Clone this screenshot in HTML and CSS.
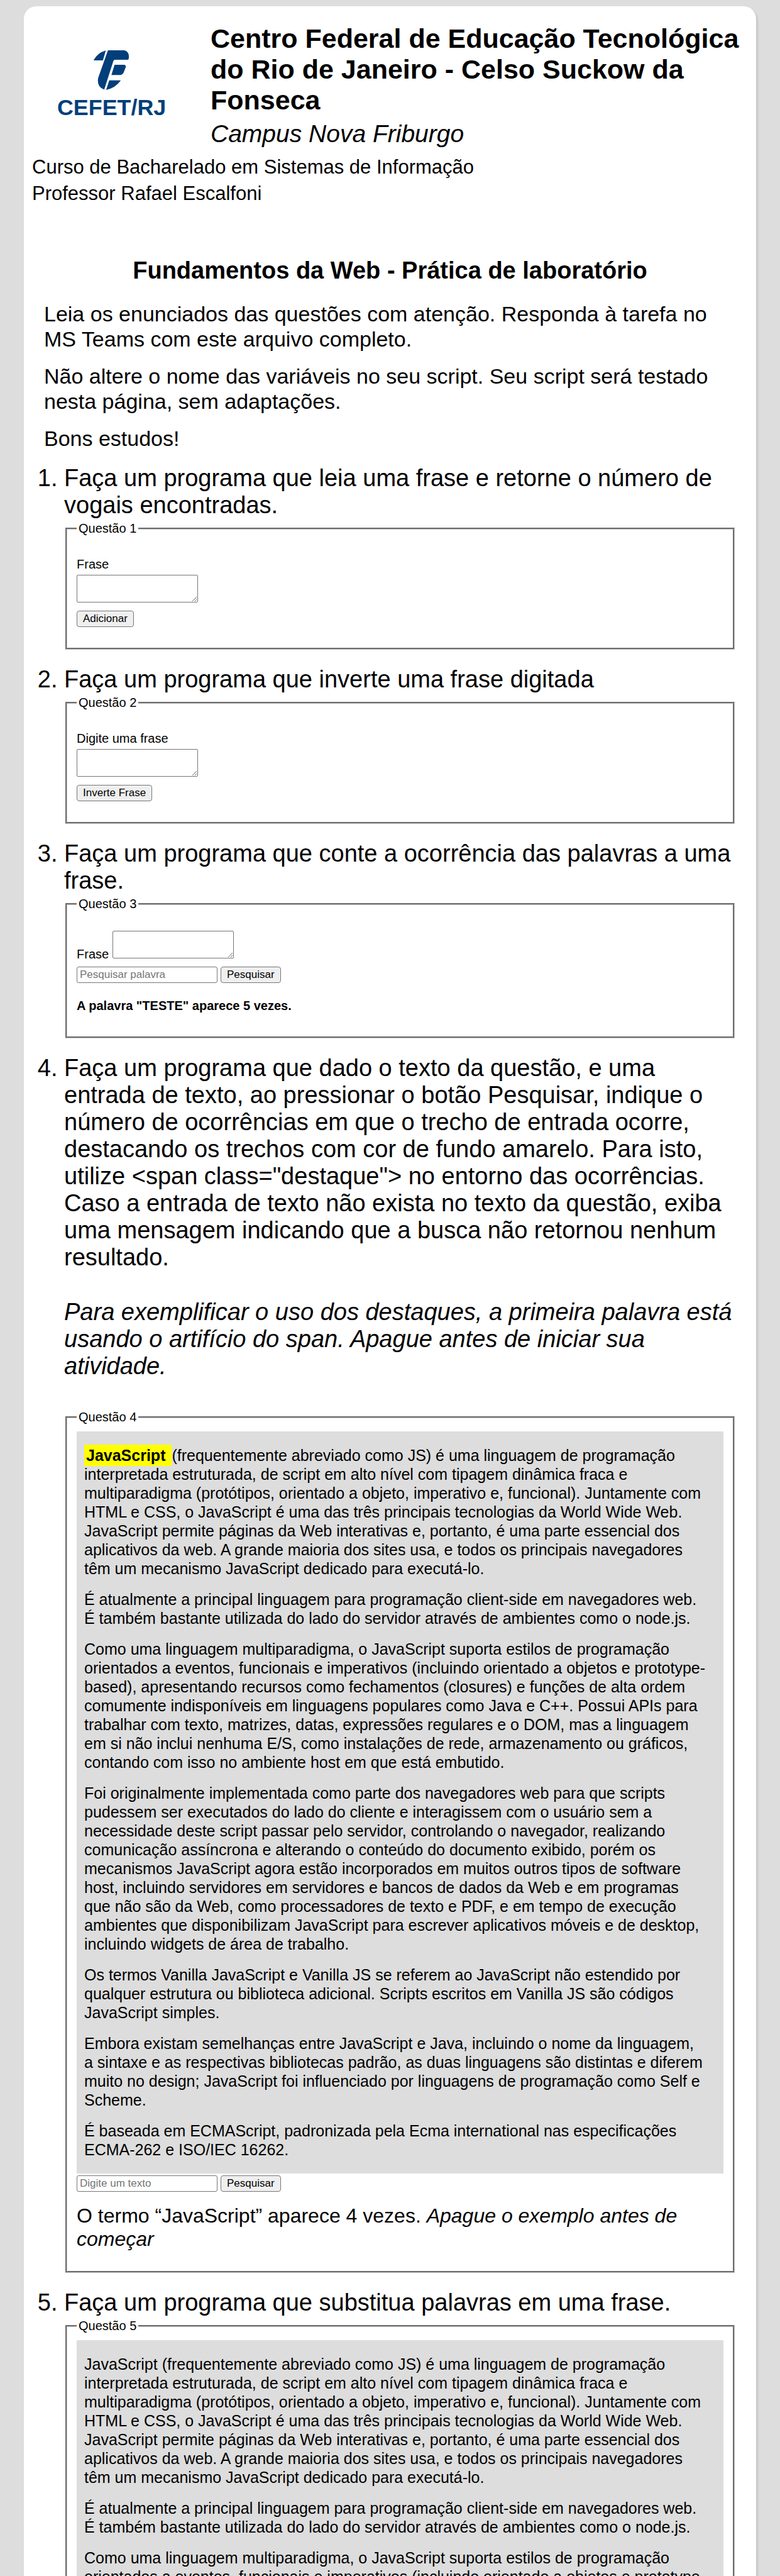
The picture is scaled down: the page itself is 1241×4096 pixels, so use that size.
FILE: index.html
```html
<!DOCTYPE html>
<html lang="pt-BR">
<head>
<meta charset="utf-8">
<title>Fundamentos da Web - Prática de laboratório</title>
<link rel="stylesheet" href="styles.css">
</head>
<body>
<div class="sheet">
  <header class="masthead">
    <div class="brand">
      <svg class="logo" viewBox="135 120 820 520" role="img" aria-label="CEFET/RJ">
        <g fill="#003f7a">
          <path d="M404 209 Q435 152 497 135 L475 209 Z"/>
          <path d="M513 134 H636 Q668 140 671 178 Q671 194 666 205 H566 Q556 205 553 216 L485 430 Q436 413 437 360 Q438 345 442 334 Z"/>
          <path d="M563 243 H632 Q649 244 648 258 L632 300 Q623 318 608 319 H539 Z"/>
          <path d="M523 360 H610 Q570 418 499 432 Z"/>
          <text x="130" y="624" class="logo-text">CEFET/RJ</text>
        </g>
      </svg>
    </div>
    <div class="institution">
      <h1>Centro Federal de Educação Tecnológica do Rio de Janeiro - Celso Suckow da Fonseca</h1>
      <p class="campus">Campus Nova Friburgo</p>
    </div>
    <div class="course">
      <div>Curso de Bacharelado em Sistemas de Informação</div>
      <div>Professor Rafael Escalfoni</div>
    </div>
  </header>

  <main>
    <h2>Fundamentos da Web - Prática de laboratório</h2>
    <div class="intro">
      <p>Leia os enunciados das questões com atenção. Responda à tarefa no MS Teams com este arquivo completo.</p>
      <p>Não altere o nome das variáveis no seu script. Seu script será testado nesta página, sem adaptações.</p>
      <p>Bons estudos!</p>
    </div>

    <ol class="questions">
      <li>Faça um programa que leia uma frase e retorne o número de vogais encontradas.
        <fieldset>
          <legend>Questão 1</legend>
          <div class="exercise">
            <label class="stacked" for="frase1">Frase</label>
            <div class="row"><textarea id="frase1"></textarea></div>
            <div class="controls"><button type="button">Adicionar</button></div>
          </div>
        </fieldset>
      </li>
      <li>Faça um programa que inverte uma frase digitada
        <fieldset>
          <legend>Questão 2</legend>
          <div class="exercise">
            <label class="stacked" for="frase2">Digite uma frase</label>
            <div class="row"><textarea id="frase2"></textarea></div>
            <div class="controls"><button type="button">Inverte Frase</button></div>
          </div>
        </fieldset>
      </li>
      <li>Faça um programa que conte a ocorrência das palavras a uma frase.
        <fieldset>
          <legend>Questão 3</legend>
          <div class="exercise">
            <div class="row"><label for="frase3">Frase</label> <textarea id="frase3"></textarea></div>
            <div class="controls">
              <input type="text" placeholder="Pesquisar palavra" aria-label="Pesquisar palavra">
              <button type="button">Pesquisar</button>
            </div>
            <p class="count">A palavra "TESTE" aparece 5 vezes.</p>
          </div>
        </fieldset>
      </li>
      <li>
        <p class="statement">Faça um programa que dado o texto da questão, e uma entrada de texto, ao pressionar o botão Pesquisar, indique o número de ocorrências em que o trecho de entrada ocorre, destacando os trechos com cor de fundo amarelo. Para isto, utilize &lt;span class="destaque"&gt; no entorno das ocorrências. Caso a entrada de texto não exista no texto da questão, exiba uma mensagem indicando que a busca não retornou nenhum resultado.</p>
        <p class="statement"><em>Para exemplificar o uso dos destaques, a primeira palavra está usando o artifício do span. Apague antes de iniciar sua atividade.</em></p>
        <fieldset>
          <legend>Questão 4</legend>
          <article class="passage">
            <p><span class="destaque">JavaScript </span>(frequentemente abreviado como JS) é uma linguagem de programação interpretada estruturada, de script em alto nível com tipagem dinâmica fraca e multiparadigma (protótipos, orientado a objeto, imperativo e, funcional). Juntamente com HTML e CSS, o JavaScript é uma das três principais tecnologias da World Wide Web. JavaScript permite páginas da Web interativas e, portanto, é uma parte essencial dos aplicativos da web. A grande maioria dos sites usa, e todos os principais navegadores<br>têm um mecanismo JavaScript dedicado para executá-lo.</p>
            <p>É atualmente a principal linguagem para programação client-side em navegadores web.<br>É também bastante utilizada do lado do servidor através de ambientes como o node.js.</p>
            <p>Como uma linguagem multiparadigma, o JavaScript suporta estilos de programação orientados a eventos, funcionais e imperativos (incluindo orientado a objetos e prototype-based), apresentando recursos como fechamentos (closures) e funções de alta ordem comumente indisponíveis em linguagens populares como Java e C++. Possui APIs para trabalhar com texto, matrizes, datas, expressões regulares e o DOM, mas a linguagem<br>em si não inclui nenhuma E/S, como instalações de rede, armazenamento ou gráficos, contando com isso no ambiente host em que está embutido.</p>
            <p>Foi originalmente implementada como parte dos navegadores web para que scripts pudessem ser executados do lado do cliente e interagissem com o usuário sem a necessidade deste script passar pelo servidor, controlando o navegador, realizando comunicação assíncrona e alterando o conteúdo do documento exibido, porém os mecanismos JavaScript agora estão incorporados em muitos outros tipos de software host, incluindo servidores em servidores e bancos de dados da Web e em programas<br>que não são da Web, como processadores de texto e PDF, e em tempo de execução ambientes que disponibilizam JavaScript para escrever aplicativos móveis e de desktop, incluindo widgets de área de trabalho.</p>
            <p>Os termos Vanilla JavaScript e Vanilla JS se referem ao JavaScript não estendido por qualquer estrutura ou biblioteca adicional. Scripts escritos em Vanilla JS são códigos JavaScript simples.</p>
            <p>Embora existam semelhanças entre JavaScript e Java, incluindo o nome da linguagem,<br>a sintaxe e as respectivas bibliotecas padrão, as duas linguagens são distintas e diferem muito no design; JavaScript foi influenciado por linguagens de programação como Self e Scheme.</p>
            <p>É baseada em ECMAScript, padronizada pela Ecma international nas especificações ECMA-262 e ISO/IEC 16262.</p>
          </article>
          <div class="controls">
            <input type="text" placeholder="Digite um texto" aria-label="Digite um texto">
            <button type="button">Pesquisar</button>
          </div>
          <p class="result">O termo “JavaScript” aparece 4 vezes. <em>Apague o exemplo antes de começar</em></p>
        </fieldset>
      </li>
      <li>Faça um programa que substitua palavras em uma frase.
        <fieldset>
          <legend>Questão 5</legend>
          <article class="passage">
            <p>JavaScript (frequentemente abreviado como JS) é uma linguagem de programação interpretada estruturada, de script em alto nível com tipagem dinâmica fraca e multiparadigma (protótipos, orientado a objeto, imperativo e, funcional). Juntamente com HTML e CSS, o JavaScript é uma das três principais tecnologias da World Wide Web. JavaScript permite páginas da Web interativas e, portanto, é uma parte essencial dos aplicativos da web. A grande maioria dos sites usa, e todos os principais navegadores<br>têm um mecanismo JavaScript dedicado para executá-lo.</p>
            <p>É atualmente a principal linguagem para programação client-side em navegadores web.<br>É também bastante utilizada do lado do servidor através de ambientes como o node.js.</p>
            <p>Como uma linguagem multiparadigma, o JavaScript suporta estilos de programação orientados a eventos, funcionais e imperativos (incluindo orientado a objetos e prototype-</p>
          </article>
        </fieldset>
      </li>
    </ol>
  </main>
</div>
</body>
</html>
```
FILE: styles.css
```css
* {
  box-sizing: border-box;
}

html {
  background: #ddd;
}

body {
  height: 100vh;
  margin: 0;
  padding: 10px 38px 0;
  overflow: hidden;
  font-family: "Liberation Sans", Arial, sans-serif;
  font-size: 20px;
  color: #000;
}

h1,
h2,
p {
  margin: 0;
}

.sheet {
  padding-top: 27px;
  background: #fff;
  border-radius: 20px;
  box-shadow: 3px 3px 3px rgba(0, 0, 0, 0.1);
}

/* Header */
.masthead {
  display: grid;
  grid-template-columns: 284px 1fr;
  padding: 0 0 0 13px;
}

.brand {
  padding: 40px 0 0 41px;
}

.logo {
  display: block;
  width: 173px;
  height: 110px;
  overflow: visible;
}

.logo-text {
  font-family: "Liberation Sans", Arial, sans-serif;
  font-size: 170px;
  font-weight: bold;
}

h1 {
  font-size: 43px;
  line-height: 49px;
}

.campus {
  margin-top: 7px;
  font-size: 39px;
  line-height: 44px;
  font-style: italic;
}

.course {
  grid-column: 1 / -1;
  margin-top: 10px;
  font-size: 31px;
  line-height: 42px;
}

/* Body */
main {
  padding: 80px 32px 0;
}

h2 {
  font-size: 38px;
  line-height: 43px;
  text-align: center;
}

.intro {
  display: flex;
  flex-direction: column;
  gap: 19px;
  margin-top: 27px;
  font-size: 34px;
  line-height: 40px;
}

.questions {
  margin: 22px 0 0;
  padding-left: 32px;
  font-size: 38px;
  line-height: 43px;
}

.questions > li {
  margin-bottom: 26px;
}

.statement {
  margin-bottom: 44px;
}

fieldset {
  margin: 4px 2px 0;
  padding: 11px 15px 10px;
  border: 3px groove #c0c0c0;
  font-size: 20px;
  line-height: 23px;
}

.statement + fieldset {
  margin-top: 48px;
}

legend {
  padding: 0 3px;
}

.exercise {
  padding: 20px 0 23px;
}

.stacked {
  display: block;
  margin: 3px 0 5px;
}

.row {
  margin-bottom: 8px;
}

textarea {
  width: 193px;
  height: 44px;
  border: 1px solid #767676;
  border-radius: 2px;
}

.controls {
  display: flex;
  gap: 5px;
}

input,
button {
  height: 26px;
  border: 1px solid #767676;
  font-family: inherit;
  font-size: 17px;
}

input {
  width: 224px;
  padding: 0 4px;
  border-radius: 3px;
}

input::placeholder {
  color: #757575;
}

button {
  padding: 0 9px;
  border-radius: 4px;
  background: #efefef;
  color: #000;
}

.count {
  margin: 25px 0 4px;
  font-weight: bold;
}

.passage {
  display: flex;
  flex-direction: column;
  gap: 19px;
  margin-bottom: 3px;
  padding: 23px 12px;
  background: #ddd;
  font-size: 25px;
  line-height: 30px;
}

.destaque {
  padding: 3px;
  background: #ff0;
  font-weight: bold;
}

.result {
  margin: 20px 0 22px;
  font-size: 32px;
  line-height: 37px;
}
```
